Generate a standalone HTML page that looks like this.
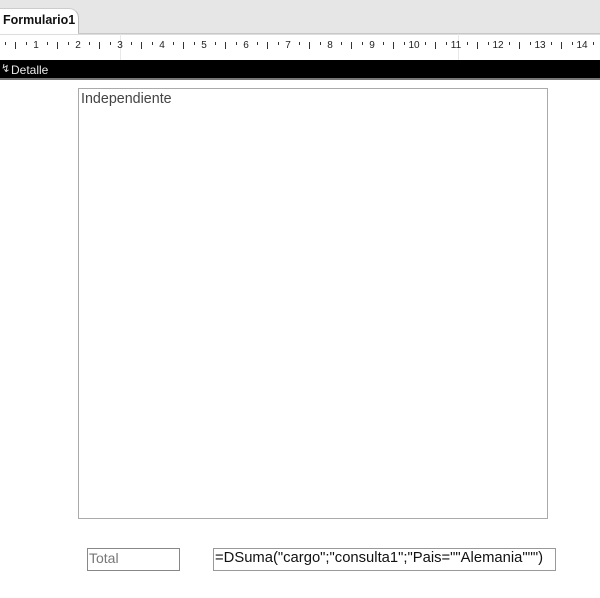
<!DOCTYPE html>
<html><head><meta charset="utf-8"><style>
body{margin:0;width:600px;height:598px;background:#fff;position:relative;overflow:hidden;font-family:"Liberation Sans",sans-serif}
.abs{position:absolute}
.n{position:absolute;top:40px;font-size:10px;color:#222;transform:translateX(-50%)}
.t{position:absolute;width:1px;background:#333}
</style></head><body>
<div class="abs" style="left:0;top:0;width:600px;height:34px;background:#e6e6e6"></div>
<div class="abs" style="left:0;top:8px;width:78px;height:27px;background:#fff;border-top-right-radius:10px;border-right:1px solid #bbb;border-top:1px solid #ccc"></div>
<div class="abs" style="left:3px;top:13px;font-size:12.5px;font-weight:bold;color:#111">Formulario1</div>
<div class="abs" style="left:78px;top:33px;width:522px;height:1px;background:#c8c8c8"></div>
<div class="abs" style="left:0;top:34px;width:600px;height:26px;background:#fff;border-top:1px solid #ddd"></div>
<div class="abs" style="left:120px;top:34px;width:1px;height:26px;background:#e8e8e8"></div>
<div class="abs" style="left:458px;top:34px;width:1px;height:26px;background:#e8e8e8"></div>
<div id="r"></div>
<script>
var h='';for(var n=0;n<=14;n++){var x=-6+n*42;if(n>0)h+='<span class="n" style="left:'+x+'px">'+n+'</span>';
h+='<div class="t" style="left:'+Math.round(x+10.5)+'px;top:42px;height:3px"></div>';
h+='<div class="t" style="left:'+Math.round(x+21)+'px;top:42px;height:7px"></div>';
h+='<div class="t" style="left:'+Math.round(x+31.5)+'px;top:42px;height:3px"></div>';}
document.getElementById('r').innerHTML=h;
</script>
<div class="abs" style="left:0;top:60px;width:600px;height:18px;background:#000"></div>
<div class="abs" style="left:0;top:78px;width:600px;height:2px;background:#777"></div>
<div class="abs" style="left:1px;top:62px;font-size:11px;color:#ddd">&#8623;</div>
<div class="abs" style="left:11px;top:63px;font-size:12px;color:#e8e8e8">Detalle</div>
<div class="abs" style="left:78px;top:88px;width:468px;height:429px;border:1px solid #aaa"></div>
<div class="abs" style="left:81px;top:91px;font-size:14.3px;color:#444">Independiente</div>
<div class="abs" style="left:87px;top:548px;width:91px;height:21px;border:1px solid #888"></div>
<div class="abs" style="left:89px;top:550px;font-size:14px;color:#777">Total</div>
<div class="abs" style="left:213px;top:548px;width:341px;height:21px;border:1px solid #999"></div>
<div class="abs" style="left:215px;top:550px;font-size:14.8px;color:#111">=DSuma("cargo";"consulta1";"Pais=""Alemania""")</div>
</body></html>
